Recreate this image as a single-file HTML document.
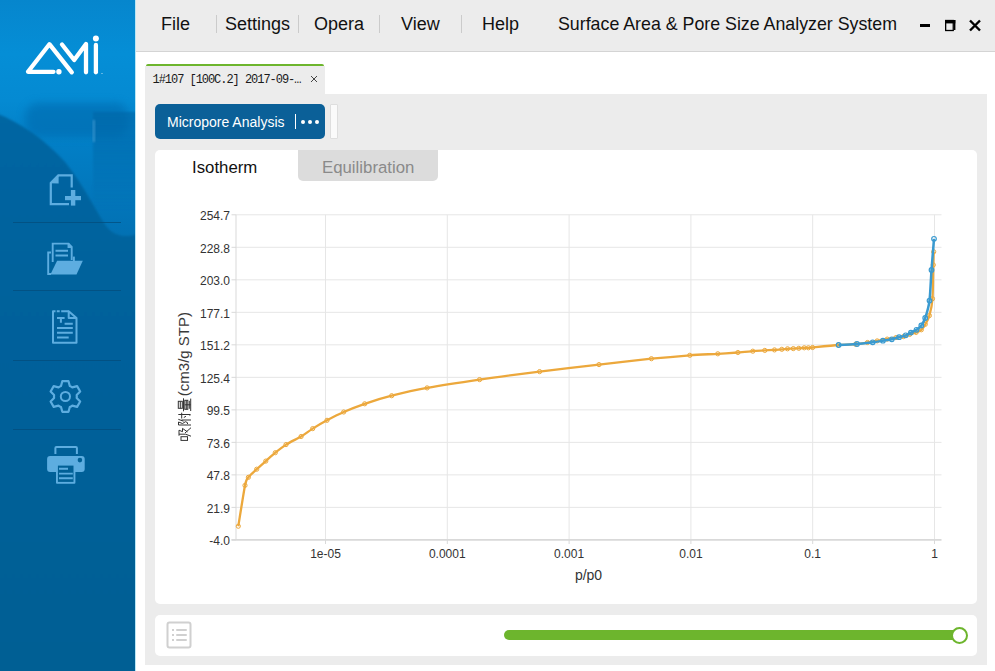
<!DOCTYPE html>
<html><head><meta charset="utf-8">
<style>
*{margin:0;padding:0;box-sizing:border-box}
html,body{width:995px;height:671px;overflow:hidden;background:#fff;font-family:"Liberation Sans",sans-serif;position:relative}
.abs{position:absolute}
#side{left:0;top:0;width:135px;height:671px;background:#005f94;overflow:hidden}
#sideline{left:135px;top:0;width:1px;height:671px;background:#b9e6f5}
#header{left:136px;top:0;width:859px;height:52px;background:#ececec;border-bottom:1px solid #d4d4d4}
.menu{position:absolute;top:14px;font-size:18px;color:#111;line-height:20px;white-space:nowrap}
.sep{position:absolute;top:15px;width:1px;height:18px;background:#cbcbcb}
#tab{left:145px;top:65.5px;width:180px;height:30px;background:#ececec}
#tabg{left:146px;top:64px;width:178px;height:2px;background:#6db52d;border-radius:2px 2px 0 0}
#tabtxt{left:152.5px;top:72.5px;font-family:"Liberation Mono",monospace;font-size:12px;letter-spacing:-1.04px;color:#1a1a1a;white-space:nowrap}
#panel{left:145px;top:94px;width:842px;height:571px;background:#ececec}
#btn{left:155px;top:104px;width:170px;height:35px;background:#0b6098;border-radius:5px}
#btntxt{left:167px;top:114px;font-size:14px;color:#fff;white-space:nowrap}
#btnsmall{left:330px;top:104px;width:8px;height:35px;background:#fafafa;border:1px solid #dedede;border-radius:1px}
#card{left:155px;top:150px;width:822px;height:454px;background:#fff;border-radius:5px}
#tabeq{left:298px;top:150px;width:140px;height:31px;background:#dcdcdc;border-radius:0 0 5px 5px}
.tt{position:absolute;top:157.5px;font-size:16.8px;line-height:20px;white-space:nowrap}
#card2{left:155px;top:615px;width:822px;height:41px;background:#fff;border-radius:5px}
.chart{position:absolute;left:0;top:0}
</style></head><body>
<div id="side" class="abs">
  <svg width="135" height="671" viewBox="0 0 135 671" style="position:absolute;left:0;top:0">
    <defs>
      <linearGradient id="sg" x1="0" y1="0" x2="0" y2="1">
        <stop offset="0" stop-color="#0686cd"/>
        <stop offset="0.08" stop-color="#058ed6"/>
        <stop offset="0.15" stop-color="#058ad2"/>
        <stop offset="0.22" stop-color="#027ec5"/>
        <stop offset="0.36" stop-color="#0270b2"/>
        <stop offset="1" stop-color="#016096"/>
      </linearGradient>
      <linearGradient id="wg" x1="0" y1="0" x2="0" y2="1">
        <stop offset="0" stop-color="#0266a3"/>
        <stop offset="0.3" stop-color="#01629c"/>
        <stop offset="1" stop-color="#005f94"/>
      </linearGradient>
      <linearGradient id="rg" x1="0" y1="0" x2="0" y2="1"><stop offset="0" stop-color="#0266a6" stop-opacity="0.6"/><stop offset="0.4" stop-color="#0266a6" stop-opacity="0.45"/><stop offset="1" stop-color="#0266a6" stop-opacity="0"/></linearGradient>
      <filter id="bl" x="-20%" y="-20%" width="140%" height="140%"><feGaussianBlur stdDeviation="1.2"/></filter><filter id="bl1" x="-50%" y="-20%" width="200%" height="140%"><feGaussianBlur stdDeviation="0.8"/></filter><filter id="bl3" x="-30%" y="-50%" width="160%" height="200%"><feGaussianBlur stdDeviation="4"/></filter>
      <filter id="bl2" x="-50%" y="-100%" width="200%" height="300%"><feGaussianBlur stdDeviation="6"/></filter>
    </defs>
    <rect width="135" height="671" fill="url(#sg)"/>
    <rect x="25" y="103" width="104" height="34" rx="14" fill="#046cb0" opacity="0.65" filter="url(#bl3)"/><rect x="93" y="112" width="50" height="100" fill="url(#rg)" filter="url(#bl1)"/><rect x="93" y="120" width="1.6" height="22" fill="#6ab8ea" opacity="0.6" filter="url(#bl1)"/>
    <path d="M-5 113 C 20 122, 45 140, 65 162 C 83 184, 96 211, 106 226 C 113 236, 126 239, 140 233 L140 680 L-5 680 Z" fill="url(#wg)" filter="url(#bl)"/>
  </svg>
  <svg class="abs" style="left:0;top:0" width="135" height="100" viewBox="0 0 135 100">
    <g fill="none" stroke="#fff" stroke-width="4.3" stroke-linecap="round" stroke-linejoin="round">
      <path d="M53.5 71.8 L28 71.8 L49.4 44.2 L71.8 72.3"/>
      <path d="M62 44.5 L74.2 60 L86 44 L86 72.3"/>
      <path d="M95.9 45 L95.9 72.3"/>
    </g>
    <circle cx="95.9" cy="38.6" r="3" fill="#fff"/>
    <circle cx="58.9" cy="71.8" r="2.7" fill="#fff"/>
    <circle cx="102" cy="73.5" r="0.6" fill="#fff" opacity="0.8"/>
  </svg>
  <svg class="abs" style="left:0;top:0" width="135" height="500" viewBox="0 0 135 500">
    <g stroke="#034d7c" stroke-width="1" opacity="0.75" shape-rendering="crispEdges">
      <line x1="13" y1="222.5" x2="121" y2="222.5"/>
      <line x1="13" y1="290.5" x2="121" y2="290.5"/>
      <line x1="13" y1="360.5" x2="121" y2="360.5"/>
      <line x1="13" y1="429.5" x2="121" y2="429.5"/>
    </g>
    <g fill="none" stroke="#5dade0" stroke-width="2.2">
      <!-- new file -->
      <path d="M69 204.1 L50.8 204.1 L50.8 183 L58.3 175.4 L71.7 175.4 L71.7 187.5"/>
    </g>
    <g fill="#5dade0">
      <path d="M50 183.2 L58.6 174.5 L58.6 183.6 Z"/>
      <rect x="65" y="196" width="16" height="4.2"/>
      <rect x="70.9" y="190" width="4.4" height="15.6"/>
    </g>
    <!-- folder -->
    <g fill="none" stroke="#5dade0" stroke-width="1.9">
      <path d="M52.7 262 L52.7 243.6 L68.5 243.6 L71.7 247 L71.7 260"/>
      <path d="M68.5 243.6 L68.5 247 L71.7 247"/>
      <path d="M51 252.5 L48.2 252.5 L48.2 274 L51 274"/>
      <path d="M73.9 256.6 L73.9 261"/>
      <path d="M55.5 250.8 H68 M55.5 255.5 H68"/>
    </g>
    <path fill="#5dade0" d="M57.1 260.7 L82.8 260.7 L76.5 274.5 L50.4 274.5 Z"/>
    <!-- text doc -->
    <g fill="none" stroke="#5dade0" stroke-width="2">
      <path d="M55.5 311.2 L53 311.2 L53 342.8 L76.5 342.8 L76.5 317.9 L68.7 311.2 L68.7 317.9 L76.5 317.9" stroke-linejoin="round"/><path d="M56.8 311.2 H59.7 M61.2 311.2 H68.7"/>
      <path d="M57 317.9 H64.6 M60.9 317.9 V322.7 M64.6 323.7 H72.8 M57 328 H72.8 M57 332.8 H72.8 M57 337.6 H68.7"/>
    </g>
    <!-- gear -->
    <path id="gear" fill="none" stroke="#5dade0" stroke-width="2.2" stroke-linejoin="round" d="M61.00 385.98 L62.30 381.21 L68.50 381.21 L69.80 385.98 A11.40 11.40 0 0 1 72.31 387.43 L77.09 386.17 L80.19 391.54 L76.71 395.05 A11.40 11.40 0 0 1 76.71 397.95 L80.19 401.46 L77.09 406.83 L72.31 405.57 A11.40 11.40 0 0 1 69.80 407.02 L68.50 411.79 L62.30 411.79 L61.00 407.02 A11.40 11.40 0 0 1 58.49 405.57 L53.71 406.83 L50.61 401.46 L54.09 397.95 A11.40 11.40 0 0 1 54.09 395.05 L50.61 391.54 L53.71 386.17 L58.49 387.43 A11.40 11.40 0 0 1 61.00 385.98 Z"/>
    <circle cx="65.4" cy="396.5" r="4.6" fill="none" stroke="#5dade0" stroke-width="2"/>
    <!-- printer -->
    <path d="M55.4 454 L55.4 448 Q55.4 447.1 56.4 447.1 L75.9 447.1 Q76.9 447.1 76.9 448 L76.9 454" fill="none" stroke="#5dade0" stroke-width="2"/>
    <rect x="47.1" y="456" width="37.6" height="16" rx="3" fill="#5dade0"/>
    <circle cx="79.9" cy="460.1" r="2.3" fill="#016096"/>
    <rect x="56" y="464.5" width="19.4" height="19.3" rx="1" fill="#5dade0"/>
    <rect x="57.9" y="465.6" width="15.6" height="16.3" fill="#016096"/>
    <path d="M59 468.8 H68 M59 473.6 H72.8 M59 478.2 H72.8" stroke="#5dade0" stroke-width="1.9"/>
  </svg>
</div>
<div id="sideline" class="abs"></div>
<div id="header" class="abs"></div>
<div class="menu" style="left:161px">File</div>
<div class="sep" style="left:216px"></div>
<div class="menu" style="left:225px">Settings</div>
<div class="sep" style="left:298px"></div>
<div class="menu" style="left:314px">Opera</div>
<div class="sep" style="left:379px"></div>
<div class="menu" style="left:401px">View</div>
<div class="sep" style="left:461px"></div>
<div class="menu" style="left:482px">Help</div>
<div class="menu" style="left:558px;font-size:17.8px">Surface Area &amp; Pore Size Analyzer System</div>
<div class="abs" style="left:920px;top:23.5px;width:10px;height:3.7px;background:#000"></div>
<svg class="abs" style="left:944px;top:19px" width="13" height="13" viewBox="0 0 13 13"><rect x="1" y="1" width="10.3" height="3.4" fill="#000"/><rect x="1.65" y="1.5" width="7.6" height="10" fill="none" stroke="#000" stroke-width="1.3"/><rect x="10" y="1" width="1.4" height="10" fill="#000"/></svg>
<svg class="abs" style="left:968px;top:19px" width="14" height="13" viewBox="0 0 14 13"><path d="M2 1.5 L12 11.5 M12 1.5 L2 11.5" stroke="#000" stroke-width="2.4"/></svg>

<div id="panel" class="abs"></div>
<div id="tab" class="abs"></div><div id="tabg" class="abs"></div>
<div id="tabtxt" class="abs">1#107 [100C.2] 2017-09-&#x2026;</div>
<svg class="abs" style="left:310px;top:75px" width="8" height="8" viewBox="0 0 8 8"><path d="M1 1 L7 7 M7 1 L1 7" stroke="#444" stroke-width="1"/></svg>
<div id="btn" class="abs"></div>
<div id="btntxt" class="abs">Micropore Analysis</div>
<div class="abs" style="left:295px;top:114px;width:1px;height:15px;background:#fff"></div>
<div class="abs" style="left:300.9px;top:119.9px;width:3.9px;height:3.9px;background:#fff;border-radius:50%"></div>
<div class="abs" style="left:307.9px;top:119.9px;width:3.9px;height:3.9px;background:#fff;border-radius:50%"></div>
<div class="abs" style="left:314.9px;top:119.9px;width:3.9px;height:3.9px;background:#fff;border-radius:50%"></div>
<div id="btnsmall" class="abs"></div>
<div id="card" class="abs"></div>
<div id="tabeq" class="abs"></div>
<div class="tt" style="left:192px;color:#111">Isotherm</div>
<div class="tt" style="left:322px;color:#8a8a8a">Equilibration</div>
<svg class="chart" width="995" height="671" viewBox="0 0 995 671">
<g stroke="#e6e6e6" stroke-width="1"><line x1="236" y1="214.80" x2="941.5" y2="214.80"/><line x1="236" y1="247.31" x2="941.5" y2="247.31"/><line x1="236" y1="279.82" x2="941.5" y2="279.82"/><line x1="236" y1="312.33" x2="941.5" y2="312.33"/><line x1="236" y1="344.84" x2="941.5" y2="344.84"/><line x1="236" y1="377.35" x2="941.5" y2="377.35"/><line x1="236" y1="409.86" x2="941.5" y2="409.86"/><line x1="236" y1="442.37" x2="941.5" y2="442.37"/><line x1="236" y1="474.88" x2="941.5" y2="474.88"/><line x1="236" y1="507.39" x2="941.5" y2="507.39"/><line x1="325.5" y1="214.8" x2="325.5" y2="540"/><line x1="447.3" y1="214.8" x2="447.3" y2="540"/><line x1="569.1" y1="214.8" x2="569.1" y2="540"/><line x1="690.9" y1="214.8" x2="690.9" y2="540"/><line x1="812.7" y1="214.8" x2="812.7" y2="540"/><line x1="934.5" y1="214.8" x2="934.5" y2="540"/></g>
<g stroke="#d9d9d9" stroke-width="1"><line x1="231.5" y1="214.80" x2="236" y2="214.80"/><line x1="231.5" y1="247.31" x2="236" y2="247.31"/><line x1="231.5" y1="279.82" x2="236" y2="279.82"/><line x1="231.5" y1="312.33" x2="236" y2="312.33"/><line x1="231.5" y1="344.84" x2="236" y2="344.84"/><line x1="231.5" y1="377.35" x2="236" y2="377.35"/><line x1="231.5" y1="409.86" x2="236" y2="409.86"/><line x1="231.5" y1="442.37" x2="236" y2="442.37"/><line x1="231.5" y1="474.88" x2="236" y2="474.88"/><line x1="231.5" y1="507.39" x2="236" y2="507.39"/><line x1="231.5" y1="539.90" x2="236" y2="539.90"/><line x1="325.5" y1="540" x2="325.5" y2="544"/><line x1="447.3" y1="540" x2="447.3" y2="544"/><line x1="569.1" y1="540" x2="569.1" y2="544"/><line x1="690.9" y1="540" x2="690.9" y2="544"/><line x1="812.7" y1="540" x2="812.7" y2="544"/><line x1="934.5" y1="540" x2="934.5" y2="544"/>
<line x1="236" y1="214.8" x2="236" y2="540"/><line x1="231.5" y1="539.9" x2="941.5" y2="539.9" stroke-width="1.6"/></g>
<g font-family="Liberation Sans" font-size="12" fill="#333"><text x="230" y="220.1" text-anchor="end">254.7</text><text x="230" y="252.6" text-anchor="end">228.8</text><text x="230" y="285.1" text-anchor="end">203.0</text><text x="230" y="317.6" text-anchor="end">177.1</text><text x="230" y="350.1" text-anchor="end">151.2</text><text x="230" y="382.7" text-anchor="end">125.4</text><text x="230" y="415.2" text-anchor="end">99.5</text><text x="230" y="447.7" text-anchor="end">73.6</text><text x="230" y="480.2" text-anchor="end">47.8</text><text x="230" y="512.7" text-anchor="end">21.9</text><text x="230" y="545.2" text-anchor="end">-4.0</text><text x="325.5" y="558" text-anchor="middle">1e-05</text><text x="447.3" y="558" text-anchor="middle">0.0001</text><text x="569.1" y="558" text-anchor="middle">0.001</text><text x="690.9" y="558" text-anchor="middle">0.01</text><text x="812.7" y="558" text-anchor="middle">0.1</text><text x="934.5" y="558" text-anchor="middle">1</text></g>
<text x="588.5" y="580" text-anchor="middle" font-family="Liberation Sans" font-size="14" fill="#333">p/p0</text>
<path d="M238.3 526.2 C239.2 520.8 243.7 491.9 245.0 485.4 C246.3 478.9 246.8 479.5 248.4 477.3 C250.0 475.1 254.4 471.4 256.7 469.2 C259.0 467.0 263.3 463.3 265.8 461.1 C268.3 458.9 272.6 454.9 275.3 452.7 C278.0 450.5 282.6 446.8 286.0 444.6 C289.4 442.4 297.5 438.6 301.1 436.5 C304.7 434.4 309.2 430.8 312.7 428.6 C316.2 426.4 322.9 422.5 327.0 420.3 C331.1 418.1 338.7 414.2 343.7 412.0 C348.7 409.8 358.3 406.0 364.7 403.8 C371.1 401.6 383.4 397.8 391.7 395.7 C400.0 393.6 415.4 390.0 427.1 387.9 C438.8 385.8 464.6 381.8 479.6 379.6 C494.6 377.4 523.7 373.6 539.6 371.6 C555.5 369.6 584.1 366.3 599.0 364.6 C613.9 362.9 639.3 359.9 651.4 358.7 C663.5 357.5 680.9 356.0 689.8 355.3 C698.7 354.6 711.4 354.2 717.8 353.8 C724.2 353.4 733.2 352.8 737.9 352.5 C742.6 352.2 749.2 351.5 752.8 351.2 C756.4 350.9 761.9 350.6 764.8 350.4 C767.7 350.2 772.2 350.0 774.5 349.9 C776.8 349.8 780.1 349.4 781.8 349.3 C783.5 349.2 786.0 348.9 787.5 348.8 C789.0 348.7 791.8 348.7 793.3 348.6 C794.8 348.5 797.3 348.4 798.8 348.3 C800.3 348.2 803.0 347.9 804.3 347.8 C805.6 347.7 807.3 347.8 808.4 347.8 C809.5 347.8 808.6 347.9 812.6 347.5 C816.6 347.1 832.9 345.4 838.6 345.0 C844.3 344.6 851.6 344.5 855.5 344.2 C859.4 343.9 864.6 342.9 867.5 342.5 C870.4 342.1 874.6 341.4 877.2 340.9 C879.8 340.4 884.7 339.5 887.2 339.1 C889.7 338.7 893.7 337.9 895.9 337.6 C898.1 337.3 901.6 337.0 903.4 336.6 C905.2 336.2 908.0 335.0 909.7 334.4 C911.4 333.8 914.6 333.0 916.1 332.4 C917.6 331.8 920.1 330.9 921.3 329.8 C922.5 328.7 924.2 326.2 925.3 324.3 C926.4 322.4 928.4 319.0 929.4 315.6 C930.4 312.2 932.0 305.5 932.5 298.7 C933.0 291.9 933.1 271.2 933.3 264.9 C933.5 258.6 933.6 253.5 933.7 251.8" fill="none" stroke="#eca83c" stroke-width="2.3" stroke-linejoin="round"/>
<g fill="none" stroke="#eca83c" stroke-width="1"><circle cx="238.3" cy="526.2" r="2.1"/><circle cx="245.0" cy="485.4" r="2.1"/><circle cx="248.4" cy="477.3" r="2.1"/><circle cx="256.7" cy="469.2" r="2.1"/><circle cx="265.8" cy="461.1" r="2.1"/><circle cx="275.3" cy="452.7" r="2.1"/><circle cx="286.0" cy="444.6" r="2.1"/><circle cx="301.1" cy="436.5" r="2.1"/><circle cx="312.7" cy="428.6" r="2.1"/><circle cx="327.0" cy="420.3" r="2.1"/><circle cx="343.7" cy="412.0" r="2.1"/><circle cx="364.7" cy="403.8" r="2.1"/><circle cx="391.7" cy="395.7" r="2.1"/><circle cx="427.1" cy="387.9" r="2.1"/><circle cx="479.6" cy="379.6" r="2.1"/><circle cx="539.6" cy="371.6" r="2.1"/><circle cx="599.0" cy="364.6" r="2.1"/><circle cx="651.4" cy="358.7" r="2.1"/><circle cx="689.8" cy="355.3" r="2.1"/><circle cx="717.8" cy="353.8" r="2.1"/><circle cx="737.9" cy="352.5" r="2.1"/><circle cx="752.8" cy="351.2" r="2.1"/><circle cx="764.8" cy="350.4" r="2.1"/><circle cx="774.5" cy="349.9" r="2.1"/><circle cx="781.8" cy="349.3" r="2.1"/><circle cx="787.5" cy="348.8" r="2.1"/><circle cx="793.3" cy="348.6" r="2.1"/><circle cx="798.8" cy="348.3" r="2.1"/><circle cx="804.3" cy="347.8" r="2.1"/><circle cx="808.4" cy="347.8" r="2.1"/><circle cx="812.6" cy="347.5" r="2.1"/><circle cx="838.6" cy="345.0" r="2.1"/><circle cx="855.5" cy="344.2" r="2.1"/><circle cx="867.5" cy="342.5" r="2.1"/><circle cx="877.2" cy="340.9" r="2.1"/><circle cx="887.2" cy="339.1" r="2.1"/><circle cx="895.9" cy="337.6" r="2.1"/><circle cx="903.4" cy="336.6" r="2.1"/><circle cx="909.7" cy="334.4" r="2.1"/><circle cx="916.1" cy="332.4" r="2.1"/><circle cx="921.3" cy="329.8" r="2.1"/><circle cx="925.3" cy="324.3" r="2.1"/><circle cx="929.4" cy="315.6" r="2.1"/><circle cx="932.5" cy="298.7" r="2.1"/><circle cx="933.3" cy="264.9" r="2.1"/><circle cx="933.7" cy="251.8" r="2.1"/></g>
<path d="M838.6 345.0 C841.1 344.9 852.5 344.4 857.0 344.0 C861.5 343.6 869.2 342.7 872.7 342.3 C876.2 341.9 880.4 341.1 882.9 340.7 C885.4 340.3 889.6 339.8 891.8 339.3 C894.0 338.8 897.2 337.7 899.1 337.2 C901.0 336.7 904.1 335.9 905.7 335.3 C907.3 334.7 909.5 333.3 910.9 332.6 C912.3 331.9 915.1 330.8 916.5 329.8 C917.9 328.8 920.1 327.0 921.3 325.4 C922.5 323.8 924.1 321.3 925.2 318.0 C926.3 314.7 928.7 307.0 929.5 300.6 C930.3 294.2 930.9 278.2 931.5 270.0 C932.1 261.8 933.7 243.0 934.0 238.8" fill="none" stroke="#3a9ad0" stroke-width="2.5" stroke-linejoin="round"/>
<g fill="none" stroke="#3a9ad0" stroke-width="1.2"><circle cx="838.6" cy="345.0" r="2.3"/><circle cx="857.0" cy="344.0" r="2.3"/><circle cx="872.7" cy="342.3" r="2.3"/><circle cx="882.9" cy="340.7" r="2.3"/><circle cx="891.8" cy="339.3" r="2.3"/><circle cx="899.1" cy="337.2" r="2.3"/><circle cx="905.7" cy="335.3" r="2.3"/><circle cx="910.9" cy="332.6" r="2.3"/><circle cx="916.5" cy="329.8" r="2.3"/><circle cx="921.3" cy="325.4" r="2.3"/><circle cx="925.2" cy="318.0" r="2.3"/><circle cx="929.5" cy="300.6" r="2.3"/><circle cx="931.5" cy="270.0" r="2.3"/><circle cx="934.0" cy="238.8" r="2.3"/></g>
</svg>
<svg class="abs" style="left:0;top:0" width="995" height="671" viewBox="0 0 995 671">
<g transform="translate(189,441.2) rotate(-90)">
<g fill="none" stroke="#333" stroke-width="1"><g transform="translate(0.0,-11.5)"><rect x="0.8" y="3.5" width="3.7" height="6.5"/><path d="M5.5 1.5 H11 L9.5 5 H12.8 L9.3 10 M7 1.5 V8 L5 13.5 M8.2 7.5 L13.5 13.5"/></g><g transform="translate(14.7,-11.5)"><path d="M1.5 13.5 V1 H4.5 L3 5 L4.8 8 L3.8 10 H2.5 M7.2 0.8 L5.3 6 M6.5 4 V13.5 M8 4.2 H13.8 M12 0.8 V12.8 L10.8 12.3 M9 6.3 L10.2 8.5"/></g><g transform="translate(29.4,-11.5)"><rect x="3.5" y="0.8" width="7" height="4"/><path d="M3.5 2.8 H10.5 M0.5 6 H13.5"/><rect x="2.5" y="7.3" width="9" height="3"/><path d="M2.5 8.8 H11.5 M7 7.3 V13.2 M3 11.8 H11 M0.8 13.2 H13.2"/></g></g>
<text x="45" y="0" font-family="Liberation Sans" font-size="15" fill="#3a3a3a">(cm3/g STP)</text>
</g></svg>

<div id="card2" class="abs"></div>
<svg class="abs" style="left:166px;top:621px" width="27" height="29" viewBox="0 0 27 29">
  <rect x="1.5" y="1.5" width="23" height="25" rx="2" fill="none" stroke="#d0d0d0" stroke-width="2"/>
  <g fill="#d0d0d0"><rect x="6" y="8" width="2" height="2"/><rect x="6" y="13" width="2" height="2"/><rect x="6" y="18" width="2" height="2"/></g>
  <g stroke="#d0d0d0" stroke-width="2" stroke-linecap="round"><path d="M11 9 H20 M11 14 H20 M11 19 H20"/></g>
</svg>
<div class="abs" style="left:504px;top:630px;width:460px;height:10px;background:#6db52d;border-radius:5px"></div>
<div class="abs" style="left:951px;top:627px;width:17px;height:17px;background:#fff;border:2.5px solid #6db52d;border-radius:50%"></div>
</body></html>
